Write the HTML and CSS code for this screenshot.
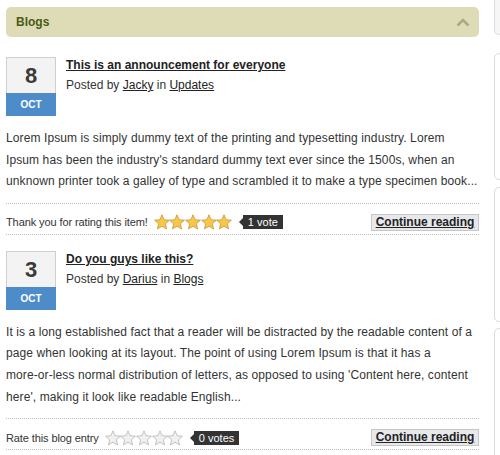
FILE: index.html
```html
<!DOCTYPE html>
<html lang="en">
<head>
  <meta charset="UTF-8" />
  <title>Blogs</title>
  <link rel="stylesheet" href="styles.css">
</head>
<body>
  <div class="pagina">
    <div class="principal">
      <div class="modulo-cabecera">
        <span>Blogs</span>
        <svg class="chevron" width="14" height="9" viewBox="0 0 14 9">
          <path d="M1.5 7.5 L7 2 L12.5 7.5" fill="none" stroke="#a9a98a" stroke-width="2.6" />
        </svg>
      </div>

      <div class="entrada">
        <div class="entrada-cabeza">
          <div class="fecha">
            <div class="fecha-dia">8</div>
            <div class="fecha-mes">OCT</div>
          </div>
          <div class="entrada-info">
            <a href="#" class="entrada-titulo">This is an announcement for everyone</a>
            <p class="entrada-autor">Posted by <a href="#">Jacky</a> in <a href="#">Updates</a></p>
          </div>
        </div>
        <p class="entrada-texto">Lorem Ipsum is simply dummy text of the printing and typesetting industry. Lorem Ipsum has been the industry's standard dummy text ever since the 1500s, when an unknown printer took a galley of type and scrambled it to make a type specimen book...</p>
        <div class="valoracion">
          <span class="valoracion-texto">Thank you for rating this item!</span>
          <span class="estrellas llenas">
            <svg viewBox="0 0 16 16"><use href="#estrella" /></svg>
            <svg viewBox="0 0 16 16"><use href="#estrella" /></svg>
            <svg viewBox="0 0 16 16"><use href="#estrella" /></svg>
            <svg viewBox="0 0 16 16"><use href="#estrella" /></svg>
            <svg viewBox="0 0 16 16"><use href="#estrella" /></svg>
          </span>
          <span class="votos">1 vote</span>
          <a href="#" class="boton-leer">Continue reading</a>
        </div>
      </div>

      <div class="entrada">
        <div class="entrada-cabeza">
          <div class="fecha">
            <div class="fecha-dia">3</div>
            <div class="fecha-mes">OCT</div>
          </div>
          <div class="entrada-info">
            <a href="#" class="entrada-titulo">Do you guys like this?</a>
            <p class="entrada-autor">Posted by <a href="#">Darius</a> in <a href="#">Blogs</a></p>
          </div>
        </div>
        <p class="entrada-texto">It is a long established fact that a reader will be distracted by the readable content of a page when looking at its layout. The point of using Lorem Ipsum is that it has a <span class="sin-corte">more-or-less</span> normal distribution of letters, as opposed to using 'Content here, content here', making it look like readable English...</p>
        <div class="valoracion">
          <span class="valoracion-texto">Rate this blog entry</span>
          <span class="estrellas vacias">
            <svg viewBox="0 0 16 16"><use href="#estrella" /></svg>
            <svg viewBox="0 0 16 16"><use href="#estrella" /></svg>
            <svg viewBox="0 0 16 16"><use href="#estrella" /></svg>
            <svg viewBox="0 0 16 16"><use href="#estrella" /></svg>
            <svg viewBox="0 0 16 16"><use href="#estrella" /></svg>
          </span>
          <span class="votos">0 votes</span>
          <a href="#" class="boton-leer">Continue reading</a>
        </div>
      </div>
    </div>

    <div class="lateral">
      <div class="caja caja-gris"></div>
      <div class="caja caja-1"></div>
      <div class="caja caja-2"></div>
      <div class="caja caja-3"></div>
    </div>
  </div>

  <svg width="0" height="0" class="oculto">
    <defs>
      <path id="estrella" d="M8 0.8 L10.12 5.69 L15.42 6.19 L11.42 9.71 L12.59 14.91 L8 12.2 L3.41 14.91 L4.58 9.71 L0.58 6.19 L5.88 5.69 Z" />
    </defs>
  </svg>
</body>
</html>
```

FILE: styles.css
```css
* {
  box-sizing: border-box;
  margin: 0;
  padding: 0;
}

body {
  font-family: 'Liberation Sans', Arial, sans-serif;
  font-size: 12px;
  color: #333;
  background-color: white;
  overflow: hidden;
}

a {
  color: #222;
}

.oculto {
  position: absolute;
}

.pagina {
  display: flex;
  width: 600px;
}

.principal {
  width: 473px;
  margin-left: 6px;
}

/* cabecera del modulo */
.modulo-cabecera {
  display: flex;
  justify-content: space-between;
  align-items: center;
  height: 30px;
  margin-top: 7px;
  margin-bottom: 4px;
  padding: 0 9px 0 10px;
  background-color: #dddcb6;
  border-radius: 5px;
  font-weight: bold;
  color: #4a5a18;
}

.chevron {
  display: block;
}

/* entradas */
.entrada {
  padding-top: 16px;
}

.entrada-cabeza {
  display: flex;
  gap: 10px;
}

.fecha {
  width: 50px;
  flex-shrink: 0;
  text-align: center;
}

.fecha-dia {
  height: 36px;
  line-height: 35px;
  background-color: #f3f3f3;
  border: 1px solid #cfcfcf;
  border-bottom: none;
  font-size: 22px;
  font-weight: bold;
  color: #3a3a3a;
}

.fecha-mes {
  height: 23px;
  line-height: 23px;
  background-color: #4d8cc8;
  color: white;
  font-size: 10px;
  font-weight: bold;
}

.entrada-titulo {
  display: block;
  line-height: 16px;
  font-weight: bold;
}

.entrada-autor {
  margin-top: 4px;
  line-height: 16px;
}

.entrada-texto {
  margin: 12px 0 10px;
  line-height: 21.6px;
  letter-spacing: 0.1px;
}

.sin-corte {
  white-space: nowrap;
}

/* valoracion */
.valoracion {
  display: flex;
  align-items: center;
  padding: 10px 0 3px;
  border-top: 1px dotted #bbb;
  border-bottom: 1px dotted #bbb;
  font-size: 11px;
}

.valoracion-texto {
  letter-spacing: -0.1px;
}

.estrellas {
  display: flex;
  margin-left: 6px;
}

.estrellas svg {
  width: 16px;
  height: 16px;
  margin-right: -0.4px;
}

.llenas svg {
  fill: #f7c64a;
  stroke: #c8983a;
  stroke-width: 0.8;
  stroke-linejoin: round;
}

.vacias svg {
  fill: #f0f0f0;
  stroke: #b4b4b4;
  stroke-width: 0.8;
  stroke-linejoin: round;
}

.votos {
  position: relative;
  margin-left: 11px;
  height: 14px;
  line-height: 14px;
  padding: 0 5px;
  background-color: #333;
  color: white;
  font-size: 11px;
}

.votos::before {
  content: "";
  position: absolute;
  left: -4px;
  top: 3px;
  border-top: 4px solid transparent;
  border-bottom: 4px solid transparent;
  border-right: 4px solid #333;
}

.boton-leer {
  margin-left: auto;
  width: 108px;
  height: 17px;
  line-height: 15px;
  text-align: center;
  background-color: #e6e8ec;
  border: 1px solid #c6c6c6;
  font-size: 12px;
  font-weight: bold;
}

/* columna lateral */
.lateral {
  margin-left: 15px;
  width: 100px;
}

.caja {
  border: 1px solid #dcdcdc;
  border-radius: 5px;
  background-color: white;
}

.caja-gris {
  height: 35px;
  border-top: none;
  border-top-left-radius: 0;
  background-color: #f6f6f6;
}

.caja-1 {
  height: 127px;
  margin-top: 18px;
}

.caja-2 {
  height: 135px;
  margin-top: 7px;
}

.caja-3 {
  height: 140px;
  margin-top: 6px;
}
```
